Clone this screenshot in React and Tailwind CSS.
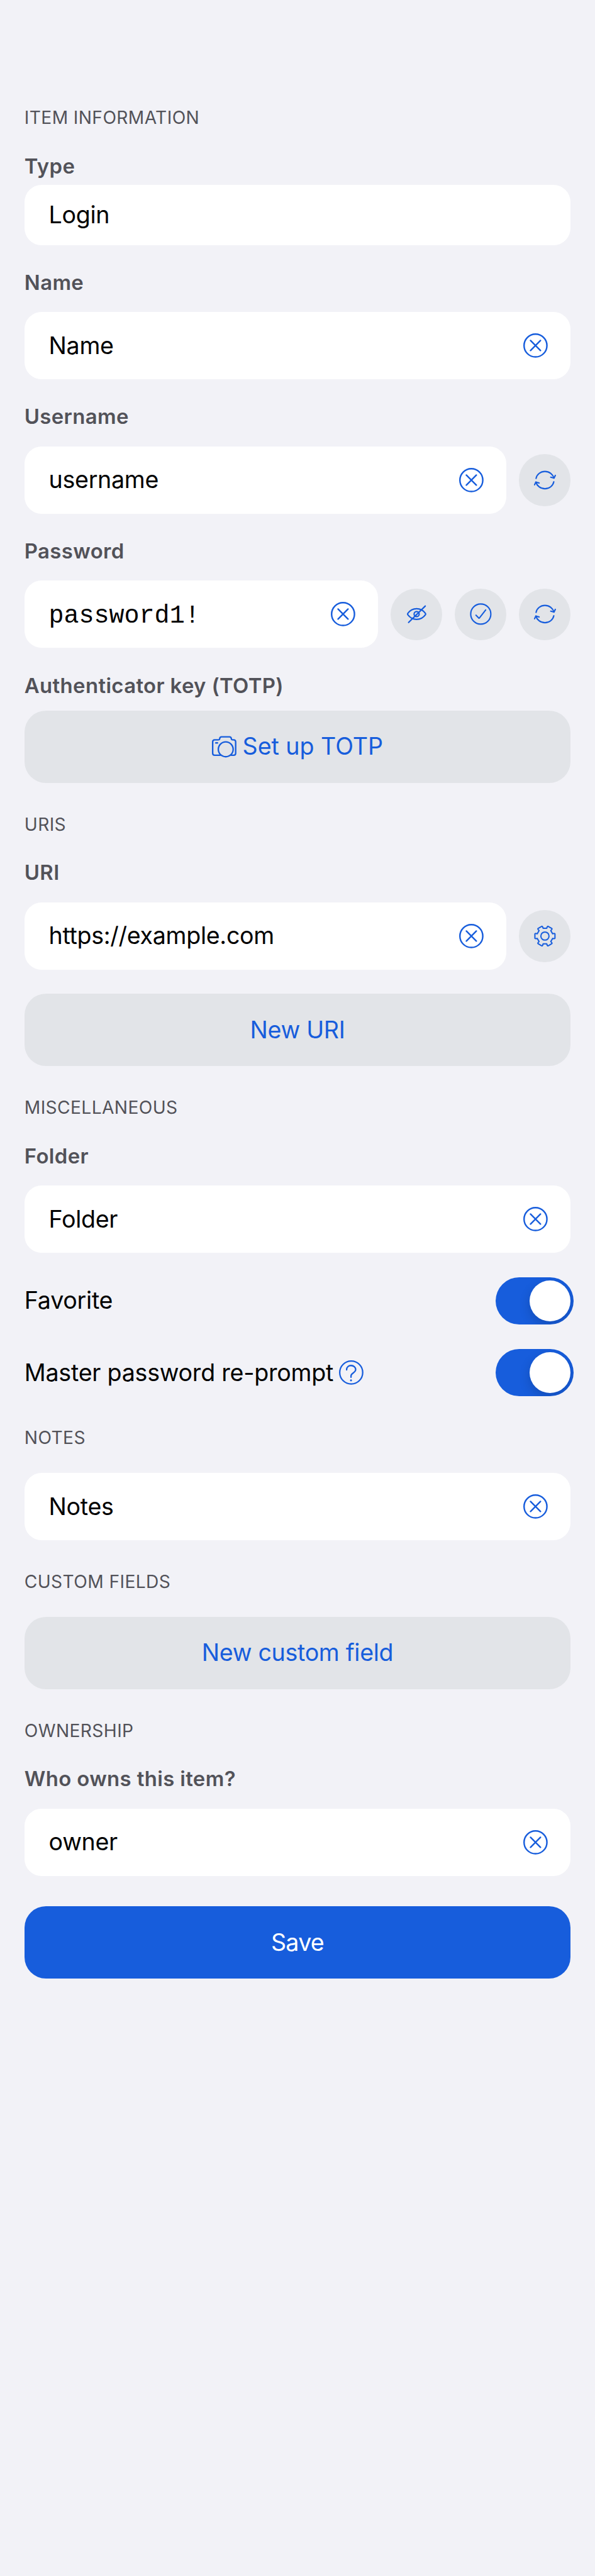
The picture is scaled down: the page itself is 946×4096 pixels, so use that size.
import React from 'react';

// Icons share a coordinate system centred on the origin.
function Icon({ size = 'size-[38.8px]', width = 2.9, children }) {
  return (
    <svg
      viewBox="-24 -24 48 48"
      className={`${size} shrink-0 overflow-visible text-[#175ddc]`}
      fill="none"
      stroke="currentColor"
      strokeWidth={width}
      strokeLinecap="round"
      strokeLinejoin="round"
      aria-hidden="true"
    >
      {children}
    </svg>
  );
}

const ClearIcon = () => (
  <Icon width={3}>
    <circle r="22.5" />
    <path d="M-9.8 -9.8L9.8 9.8M9.8 -9.8L-9.8 9.8" />
  </Icon>
);

const HelpIcon = () => (
  <Icon width={2.8}>
    <circle r="22.6" />
    <path d="M-9 -5.2V-6C-9 -10.6 -5.2 -13.8 -0.4 -13.8C4.8 -13.8 8.8 -10.4 8.8 -5.6C8.8 0.6 -0.4 0.8 -0.4 6.6V9.3" />
    <circle cx="-0.4" cy="15.4" r="1.9" fill="currentColor" stroke="none" />
  </Icon>
);

const CameraIcon = () => (
  <Icon width={2.9}>
    <path d="M-7.6 16.6H-18.6C-21 16.6 -22.6 15 -22.6 12.8V-9.4C-22.6 -12 -21 -13.6 -18.6 -13.6H-11.6C-9.6 -13.6 -8.9 -14.3 -8.8 -16C-8.6 -18.2 -7.2 -19.6 -5.2 -19.6H10.4C12.6 -19.6 13.9 -18.2 14.1 -16C14.2 -14.3 15 -13.6 16.9 -13.6H18.6C21 -13.6 22.6 -12 22.6 -9.4V12.8C22.6 15 21 16.6 18.6 16.6H13.8" />
    <circle cx="3.1" cy="5" r="14.6" />
    <path d="M-16.4 -7.6H-13.2" />
  </Icon>
);

const RefreshIcon = () => (
  <Icon width={2.6}>
    <path d="M-17.5 -3.3C-15.8 -11.2 -8.8 -17 0 -17C8.6 -17 15.6 -11.6 17.8 -4" />
    <path d="M11.4 -5.8L18 -4L20.4 -9.2" />
    <path d="M17.5 3.3C15.8 11.2 8.8 17 0 17C-8.6 17 -15.6 11.6 -17.8 4" />
    <path d="M-11.4 5.8L-18 4L-20.4 9.2" />
  </Icon>
);

const EyeSlashIcon = () => (
  <Icon width={2.7}>
    <path d="M-17.4 -1.3C-13.4 -6.9 -7 -10.5 0 -10.5S13.4 -6.9 17.4 -1.3Q18.3 0 17.4 1.3C13.4 6.9 7 10.5 0 10.5S-13.4 6.9 -17.4 1.3Q-18.3 0 -17.4 -1.3Z" />
    <circle r="5" />
    <path d="M-15.8 16.6L17 -15.8" />
  </Icon>
);

const CheckIcon = () => (
  <Icon width={2.6}>
    <circle r="19.8" />
    <path d="M-9.4 2.2L-3.9 7.8Q-3.3 8.4 -2.7 7.7L9.6 -8" />
  </Icon>
);

// Six-toothed gear outline built from one tooth turned around the centre.
const gearPath = (() => {
  const at = (deg, r) => {
    const a = (deg * Math.PI) / 180;
    return `${(Math.cos(a) * r).toFixed(2)} ${(Math.sin(a) * r).toFixed(2)}`;
  };
  let d = '';
  for (let t = 0; t < 360; t += 60) {
    d += `${t ? 'L' : 'M'}${at(t - 17, 15.8)}L${at(t - 16, 18.8)}Q${at(t - 14.5, 20.6)} ${at(t - 11, 20.1)}`;
    d += `L${at(t + 11, 20.1)}Q${at(t + 14.5, 20.6)} ${at(t + 16, 18.8)}L${at(t + 17, 15.8)}`;
  }
  return d + 'Z';
})();

const GearIcon = () => (
  <Icon width={2.5}>
    <path d={gearPath} />
    <circle r="8" />
  </Icon>
);

const Header = ({ children }) => (
  <h2 className="h-10 text-[28.2px] leading-10 font-normal tracking-[0.38px] text-[#525259] uppercase">{children}</h2>
);

const Label = ({ children }) => (
  <div className="h-10 text-[32.9px] leading-10 font-semibold tracking-[0.36px] text-[#525259]">{children}</div>
);

function Field({ value, mono, actions }) {
  return (
    <div className="flex h-[106.8px] items-center gap-[19.6px]">
      <div className="flex h-full flex-1 items-center justify-between rounded-[27px] bg-white pr-[36.2px] pl-[38.8px]">
        {mono ? (
          <span className="pt-[7px] font-['Liberation_Mono',monospace] text-[40px] leading-10 tracking-normal">{value}</span>
        ) : (
          <span>{value}</span>
        )}
        <ClearIcon />
      </div>
      {actions}
    </div>
  );
}

const RoundButton = ({ children }) => (
  <button className="flex size-[82.4px] shrink-0 items-center justify-center rounded-full bg-[#e2e4e8]">{children}</button>
);

const WideButton = ({ children }) => (
  <button className="flex h-[114.8px] w-full items-center justify-center gap-[9.7px] rounded-[34px] bg-[#e2e4e8] text-[#175ddc]">
    {children}
  </button>
);

function ToggleRow({ label, help }) {
  return (
    <div className="-mr-[4.9px] flex h-[75.2px] items-center justify-between">
      <div className="flex items-center gap-[9.4px]">
        <span className="tracking-[-0.24px]">{label}</span>
        {help && <HelpIcon />}
      </div>
      <div className="flex h-[75.2px] w-[123.7px] items-center justify-end overflow-hidden rounded-full bg-[#175ddc] pr-[4.9px]">
        <div className="size-[65.5px] rounded-full bg-white shadow-[0_7px_18px_rgba(0,0,0,0.16)]" />
      </div>
    </div>
  );
}

export default function App() {
  return (
    <main className="flex h-[4096px] w-[946px] flex-col bg-[#f2f2f7] px-[38.8px] pt-[167px] font-['Inter',sans-serif] text-[37.6px] leading-10 tracking-[-0.3px] text-black">
      <section className="flex flex-col">
        <Header>Item information</Header>
        <div className="mt-[36.9px] flex flex-col gap-[10.5px]">
          <Label>Type</Label>
          <div className="flex h-[95.4px] items-center rounded-[27px] bg-white px-[38.8px]">Login</div>
        </div>
        <div className="mt-[39.2px] flex flex-col gap-[27.5px]">
          <Label>Name</Label>
          <Field value="Name" />
        </div>
        <div className="mt-[39.2px] flex flex-col gap-[27.5px]">
          <Label>Username</Label>
          <Field value="username" actions={<RoundButton><RefreshIcon /></RoundButton>} />
        </div>
        <div className="mt-[39.2px] flex flex-col gap-[27.5px]">
          <Label>Password</Label>
          <Field
            value="password1!"
            mono
            actions={
              <>
                <RoundButton><EyeSlashIcon /></RoundButton>
                <RoundButton><CheckIcon /></RoundButton>
                <RoundButton><RefreshIcon /></RoundButton>
              </>
            }
          />
        </div>
        <div className="mt-[39.3px] flex flex-col gap-[20.4px]">
          <Label>Authenticator key (TOTP)</Label>
          <WideButton>
            <CameraIcon />
            <span className="tracking-[-0.03px]">Set up TOTP</span>
          </WideButton>
        </div>
      </section>

      <section className="mt-[46.2px] flex flex-col">
        <Header>URIs</Header>
        <div className="mt-[36.5px] mb-[38.7px] flex flex-col gap-[27.5px]">
          <Label>URI</Label>
          <Field value="https://example.com" actions={<RoundButton><GearIcon /></RoundButton>} />
        </div>
        <WideButton>New URI</WideButton>
      </section>

      <section className="mt-[45.9px] flex flex-col">
        <Header>Miscellaneous</Header>
        <div className="mt-[36.5px] mb-[38.8px] flex flex-col gap-[27.7px]">
          <Label>Folder</Label>
          <Field value="Folder" />
        </div>
        <div className="flex flex-col gap-[38.9px]">
          <ToggleRow label="Favorite" />
          <ToggleRow label="Master password re-prompt" help />
        </div>
      </section>

      <section className="mt-[45.7px] flex flex-col gap-[36.4px]">
        <Header>Notes</Header>
        <Field value="Notes" />
      </section>

      <section className="mt-[45.7px] flex flex-col gap-[36.4px]">
        <Header>Custom fields</Header>
        <WideButton>New custom field</WideButton>
      </section>

      <section className="mt-[45.8px] flex flex-col">
        <Header>Ownership</Header>
        <div className="mt-[36.7px] flex flex-col gap-[27.6px]">
          <Label>Who owns this item?</Label>
          <Field value="owner" />
        </div>
      </section>

      <button className="mt-[48.6px] h-[114.8px] w-full rounded-[34px] bg-[#175ddc] tracking-[-0.7px] text-white">Save</button>
    </main>
  );
}
